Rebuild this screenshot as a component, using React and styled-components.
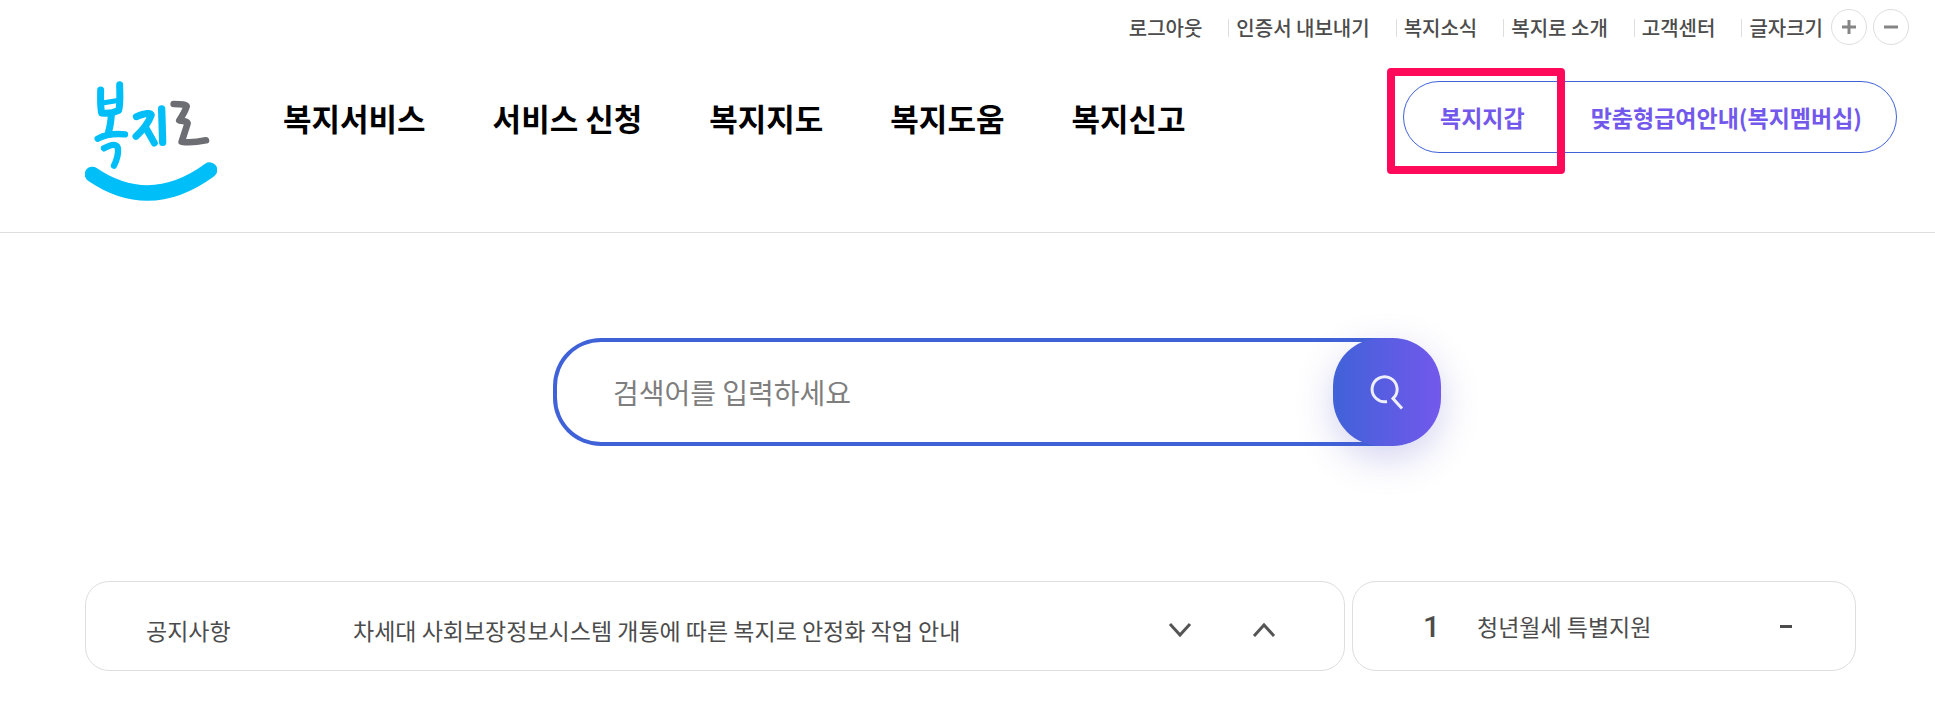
import React from "react";
import styled, { createGlobalStyle } from "styled-components";

const COLORS = {
  blue: "#4062d8",
  purple: "#7358ec",
  text: "#4c4c4c",
  line: "#dedede",
  sky: "#00bef7",
  highlight: "#ff0a5a",
};

const UTIL_LINKS = [
  "로그아웃",
  "인증서 내보내기",
  "복지소식",
  "복지로 소개",
  "고객센터",
];

const MENU = ["복지서비스", "서비스 신청", "복지지도", "복지도움", "복지신고"];

const Logo = () => (
  <svg width="132" height="120" viewBox="45 33 396 360" fill="none">
    <g
      stroke={COLORS.sky}
      strokeWidth="21"
      strokeLinecap="round"
      strokeLinejoin="round"
    >
      <path d="M92 60 C92 85 90 105 95 129 Q122 133 146 121 C152 100 149 70 149 44" />
      <path d="M97 99 L148 91" strokeWidth="15" />
      <path d="M124 134 Q122 165 116 184" />
      <path d="M83 206 Q116 188 165 193" strokeWidth="19" />
      <path d="M102 235 Q140 214 144 236 Q146 258 132 287" strokeWidth="19" />
      <path d="M199 140 Q240 124 244 135 Q232 168 198 199" />
      <path d="M226 171 L253 219" />
      <path d="M275 117 L278 217" strokeWidth="22" />
      <path d="M67 313 Q240 431 419 300" strokeWidth="46" />
    </g>
    <path
      d="M311 102 Q349 102 350 109 Q344 128 328 151 Q356 154 352 163 L335 215 Q362 220 408 211"
      stroke="#6d6e73"
      strokeWidth="20"
      strokeLinecap="round"
      strokeLinejoin="round"
    />
  </svg>
);

const App = () => {
  return (
    <>
      <GlobalStyle />
      <Header>
        <UtilBar>
          <UtilList>
            {UTIL_LINKS.map((label) => (
              <UtilItem key={label}>
                <a href="#util">{label}</a>
              </UtilItem>
            ))}
            <UtilItem>글자크기</UtilItem>
          </UtilList>
          <SizeButton aria-label="글자 크게">
            <svg width="16" height="16" viewBox="0 0 16 16">
              <path d="M1 8H15M8 1V15" stroke="#858585" strokeWidth="3" />
            </svg>
          </SizeButton>
          <SizeButton aria-label="글자 작게">
            <svg width="16" height="16" viewBox="0 0 16 16">
              <path d="M1 8H15" stroke="#858585" strokeWidth="3" />
            </svg>
          </SizeButton>
        </UtilBar>
        <MainBar>
          <LogoLink href="#home" aria-label="복지로">
            <Logo />
          </LogoLink>
          <Menu>
            {MENU.map((label) => (
              <MenuLink href="#menu" key={label}>
                {label}
              </MenuLink>
            ))}
          </Menu>
          <Pill>
            <PillLink href="#wallet" $highlighted>
              복지지갑
            </PillLink>
            <PillLink href="#membership">맞춤형급여안내(복지멤버십)</PillLink>
          </Pill>
        </MainBar>
      </Header>
      <main>
        <SearchSection>
          <SearchForm role="search" onSubmit={(e) => e.preventDefault()}>
            <SearchInput
              type="text"
              aria-label="검색어"
              placeholder="검색어를 입력하세요"
            />
            <SearchButton aria-label="검색">
              <svg width="36" height="36" viewBox="0 0 36 36" fill="none">
                <path
                  d="M18 27.5A12.5 12.5 0 1 1 24 24.5L33 34.5M24 24.5L25 23"
                  stroke="#fff"
                  strokeOpacity="0.9"
                  strokeWidth="3"
                />
              </svg>
            </SearchButton>
          </SearchForm>
        </SearchSection>
        <Boards>
          <NoticeCard>
            <NoticeLabel>공지사항</NoticeLabel>
            <NoticeLink href="#notice">
              차세대 사회보장정보시스템 개통에 따른 복지로 안정화 작업 안내
            </NoticeLink>
            <ArrowGroup>
              <ArrowButton aria-label="다음 공지">
                <svg width="24" height="16" viewBox="0 0 24 16" fill="none">
                  <path d="M2 2L12 13L22 2" stroke="#555" strokeWidth="3" />
                </svg>
              </ArrowButton>
              <ArrowButton aria-label="이전 공지">
                <svg width="24" height="16" viewBox="0 0 24 16" fill="none">
                  <path d="M2 14L12 3L22 14" stroke="#555" strokeWidth="3" />
                </svg>
              </ArrowButton>
            </ArrowGroup>
          </NoticeCard>
          <RankCard>
            <RankNumber>1</RankNumber>
            <RankLink href="#rank">청년월세 특별지원</RankLink>
            <RankSteady />
          </RankCard>
        </Boards>
      </main>
    </>
  );
};

export default App;

const GlobalStyle = createGlobalStyle`
  * {
    box-sizing: border-box;
  }
  body {
    margin: 0;
    background: #fff;
    color: ${COLORS.text};
    font-family: "Noto Sans CJK KR", sans-serif;
  }
  a {
    color: inherit;
    text-decoration: none;
  }
  button {
    display: flex;
    align-items: center;
    justify-content: center;
    padding: 0;
    border: 0;
    background: none;
    cursor: pointer;
  }
  svg {
    display: block;
  }
`;

const Header = styled.header`
  padding: 9px 26px 31px 85px;
  border-bottom: 1px solid ${COLORS.line};
`;

const UtilBar = styled.div`
  display: flex;
  align-items: center;
  justify-content: flex-end;
  gap: 6px;
`;

const UtilList = styled.ul`
  display: flex;
  align-items: center;
  gap: 26px;
  margin: 0;
  padding: 2px 2px 0 0;
  list-style: none;
`;

const UtilItem = styled.li`
  display: flex;
  align-items: center;
  font-size: 20px;
  font-weight: 500;
  line-height: 34px;
  white-space: nowrap;

  & + &::before {
    content: "";
    width: 1px;
    height: 18px;
    margin-right: 7px;
    background: ${COLORS.line};
  }
`;

const SizeButton = styled.button`
  width: 36px;
  height: 36px;
  && {
    border: 1px solid ${COLORS.line};
  }
  border-radius: 50%;
`;

const MainBar = styled.div`
  display: flex;
  align-items: flex-start;
  margin-top: 36px;
  padding-right: 12px;
`;

const LogoLink = styled.a`
  flex: none;
  margin-right: 66px;
`;

const Menu = styled.nav`
  display: flex;
  gap: 67px;
`;

const MenuLink = styled.a`
  color: #000;
  font-size: 31px;
  font-weight: 700;
  line-height: 74px;
  white-space: nowrap;
`;

const Pill = styled.div`
  display: flex;
  margin-left: auto;
  border: 1px solid ${COLORS.blue};
  border-radius: 36px;
`;

const PillLink = styled.a`
  position: relative;
  padding: 0 34px;
  color: ${COLORS.purple};
  font-size: 23px;
  font-weight: 700;
  line-height: 70px;
  white-space: nowrap;

  ${({ $highlighted }) =>
    $highlighted &&
    `
    padding: 0 32px 0 36px;
    &::after {
      content: "";
      position: absolute;
      inset: -14px -8px -22px -17px;
      border: 8px solid ${COLORS.highlight};
      border-radius: 4px;
      pointer-events: none;
    }
  `}
`;

const SearchSection = styled.section`
  display: flex;
  justify-content: center;
  padding: 105px 26px 135px 85px;
`;

const SearchForm = styled.form`
  display: flex;
  width: 100%;
  max-width: 888px;
`;

const SearchInput = styled.input`
  flex: 1;
  min-width: 0;
  height: 108px;
  margin-right: -54px;
  padding: 0 70px 0 56px;
  border: 4px solid ${COLORS.blue};
  border-right: 0;
  border-radius: 48px 0 0 48px;
  background: #fff;
  color: ${COLORS.text};
  font-family: inherit;
  font-size: 28px;
  outline: none;

  &::placeholder {
    color: #7e7e7e;
    opacity: 1;
  }
`;

const SearchButton = styled.button`
  position: relative;
  flex: none;
  width: 108px;
  height: 108px;
  && {
    background: linear-gradient(90deg, ${COLORS.blue}, ${COLORS.purple});
  }
  border-radius: 48px;
  box-shadow: 0 12px 36px rgba(80, 80, 200, 0.25);
`;

const Boards = styled.section`
  display: grid;
  grid-template-columns: 5fr 2fr;
  gap: 7px;
  padding: 0 79px 36px 85px;
`;

const Card = styled.div`
  display: flex;
  align-items: center;
  height: 90px;
  border: 1px solid ${COLORS.line};
  border-radius: 24px;
`;

const NoticeCard = styled(Card)`
  padding: 7px 68px 0 60px;
`;

const NoticeLabel = styled.strong`
  flex: none;
  width: 207px;
  font-size: 23px;
  font-weight: 400;
`;

const NoticeLink = styled.a`
  flex: 1;
  font-size: 23px;
`;

const ArrowGroup = styled.div`
  display: flex;
  gap: 60px;
`;

const ArrowButton = styled.button`
  width: 24px;
  height: 24px;
`;

const RankCard = styled(Card)`
  padding: 0 63px 0 70px;
`;

const RankNumber = styled.span`
  width: 54px;
  font-family: Roboto, sans-serif;
  font-size: 30px;
  font-weight: 500;
`;

const RankLink = styled.a`
  flex: 1;
  font-size: 23px;
`;

const RankSteady = styled.span`
  width: 12px;
  height: 3px;
  background: ${COLORS.text};
`;
